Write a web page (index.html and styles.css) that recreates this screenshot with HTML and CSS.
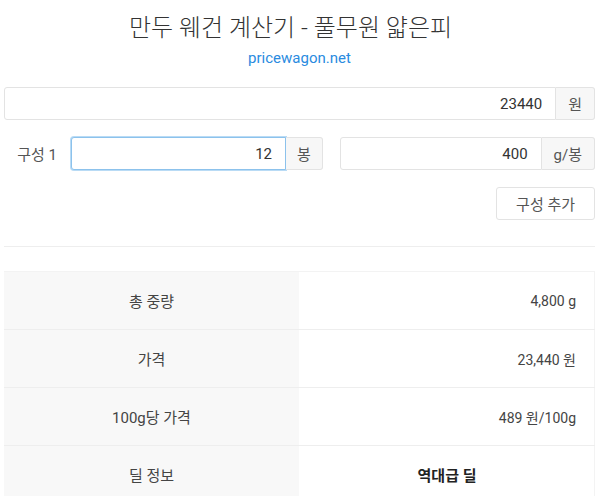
FILE: index.html
```html
<!DOCTYPE html>
<html lang="ko">
<head>
  <meta charset="UTF-8" />
  <title>만두 웨건 계산기</title>
  <link rel="stylesheet" href="styles.css">
</head>
<body>
  <div class="container">
    <h1>만두 웨건 계산기 - 풀무원 얇은피</h1>
    <a class="site" href="#">pricewagon.net</a>

    <div class="input-group price">
      <input type="text" value="23440" />
      <span class="addon">원</span>
    </div>

    <div class="row">
      <label>구성 1</label>
      <div class="input-group count">
        <input type="text" value="12" class="focus" />
        <span class="addon">봉</span>
      </div>
      <div class="input-group weight">
        <input type="text" value="400" />
        <span class="addon">g/봉</span>
      </div>
    </div>

    <div class="actions">
      <button>구성 추가</button>
    </div>

    <hr />

    <table class="result">
      <tr><th>총 중량</th><td>4,800 g</td></tr>
      <tr><th>가격</th><td>23,440 원</td></tr>
      <tr><th>100g당 가격</th><td>489 원/100g</td></tr>
      <tr><th>딜 정보</th><td class="deal">역대급 딜</td></tr>
    </table>
  </div>
</body>
</html>
```

FILE: styles.css
```css
* {
  box-sizing: border-box;
}
body {
  margin: 0;
  font-family: Roboto, "Noto Sans CJK KR", sans-serif;
  font-size: 14px;
  color: #333;
  background: #fff;
}
.container {
  width: 591px;
  margin-left: 4px;
  text-align: center;
}
h1 {
  font-size: 24px;
  font-weight: 300;
  margin: 0;
  padding: 13px 18px 0 0;
  line-height: 30px;
  color: #333;
}
.site {
  display: inline-block;
  margin-top: 4px;
  font-size: 15px;
  line-height: 22px;
  color: #2a8be0;
  text-decoration: none;
}
.input-group {
  display: flex;
  height: 33px;
}
.input-group input {
  flex: 1;
  min-width: 0;
  width: 0;
  height: 100%;
  border: 1px solid #e3e3e3;
  border-radius: 3px 0 0 3px;
  padding: 0 13px;
  text-align: right;
  font: inherit;
  font-size: 15px;
  color: #333;
  outline: none;
}
.input-group input.focus {
  border-color: #8cc2ec;
  box-shadow: 0 0 0 1px #b9dbf5;
}
.addon {
  display: flex;
  align-items: center;
  justify-content: center;
  padding: 0 12px;
  background: #f7f7f7;
  border: 1px solid #e3e3e3;
  border-left: none;
  border-radius: 0 3px 3px 0;
  color: #555;
  font-size: 15px;
}
.count .addon {
  flex: 0 0 37px;
  padding: 0;
}
.price {
  margin-top: 18px;
}
.row {
  display: flex;
  align-items: center;
  margin-top: 17px;
}
.row label {
  flex: 0 0 67px;
  padding-right: 14px;
  text-align: right;
  color: #555;
  font-size: 15px;
}
.count {
  flex: 0 0 252px;
}
.weight {
  flex: 1;
  min-width: 0;
  margin-left: 17px;
}
.actions {
  display: flex;
  justify-content: flex-end;
  margin-top: 17px;
}
button {
  height: 33px;
  padding: 0 19px;
  font: inherit;
  font-size: 15px;
  color: #555;
  background: #fff;
  border: 1px solid #e3e3e3;
  border-radius: 3px;
}
hr {
  border: none;
  border-top: 1px solid #eee;
  margin: 26px 0 24px;
}
.result {
  width: 100%;
  border-collapse: collapse;
  border-top: 1px solid #f3f3f3;
}
.result th,
.result td {
  height: 58px;
  border-bottom: 1px solid #eee;
  font-weight: 400;
}
.result th {
  width: 295px;
  background: #f8f8f8;
  text-align: center;
  color: #444;
  font-size: 15px;
}
.result td {
  text-align: right;
  padding-right: 18px;
  border-right: 1px solid #f3f3f3;
  color: #444;
}
.result td.deal {
  text-align: center;
  font-weight: 700;
  color: #222;
  padding-right: 0;
  font-size: 15px;
}
```
